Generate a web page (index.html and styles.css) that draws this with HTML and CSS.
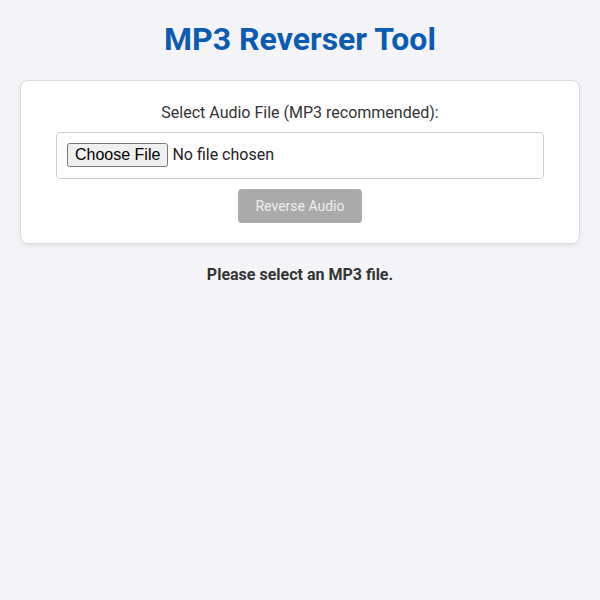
FILE: index.html
```html
<!DOCTYPE html>
<html lang="en">
<head>
<meta charset="utf-8">
<title>MP3 Reverser Tool</title>
<link rel="stylesheet" href="styles.css">
</head>
<body>
<div class="wrap">
  <h1 class="title">MP3 Reverser Tool</h1>
  <div class="card">
    <label class="label" for="file">Select Audio File (MP3 recommended):</label>
    <input class="file" id="file" type="file" accept="audio/*">
    <button class="btn" disabled>Reverse Audio</button>
  </div>
  <p class="status">Please select an MP3 file.</p>
</div>
</body>
</html>
```

FILE: styles.css
```css
html, body {
  margin: 0;
  padding: 0;
  background: #f4f4f8;
}
body {
  font-family: Roboto, "Liberation Sans", sans-serif;
  color: #333;
}
.wrap {
  padding: 0 20px;
  display: flex;
  flex-direction: column;
  align-items: stretch;
}
.title {
  margin: 21px 0 22px;
  font-size: 32px;
  line-height: 37px;
  font-weight: 700;
  color: #0b5bb3;
  text-align: center;
}
.card {
  background: #fff;
  border: 1px solid #dcdce0;
  border-radius: 8px;
  box-shadow: 0 2px 5px rgba(0,0,0,0.08);
  padding: 22px 20px 20px;
  display: flex;
  flex-direction: column;
  align-items: center;
}
.label {
  font-size: 16px;
  line-height: 19px;
  color: #333;
  margin-bottom: 10px;
}
.file {
  box-sizing: border-box;
  width: 488px;
  height: 47px;
  padding: 10px;
  font-family: Roboto, "Liberation Sans", sans-serif;
  font-size: 16px;
  color: #222;
  border: 1px solid #ccc;
  border-radius: 4px;
  background: #fff;
  margin-bottom: 10px;
}
.btn {
  width: 124px;
  height: 34px;
  border: none;
  border-radius: 4px;
  background: #aaaaaa;
  color: #eeeeee;
  font-family: Roboto, "Liberation Sans", sans-serif;
  font-size: 14px;
  cursor: not-allowed;
}
.status {
  margin: 21px 0 0;
  text-align: center;
  font-size: 16px;
  line-height: 19px;
  font-weight: 700;
  color: #333;
}
```
